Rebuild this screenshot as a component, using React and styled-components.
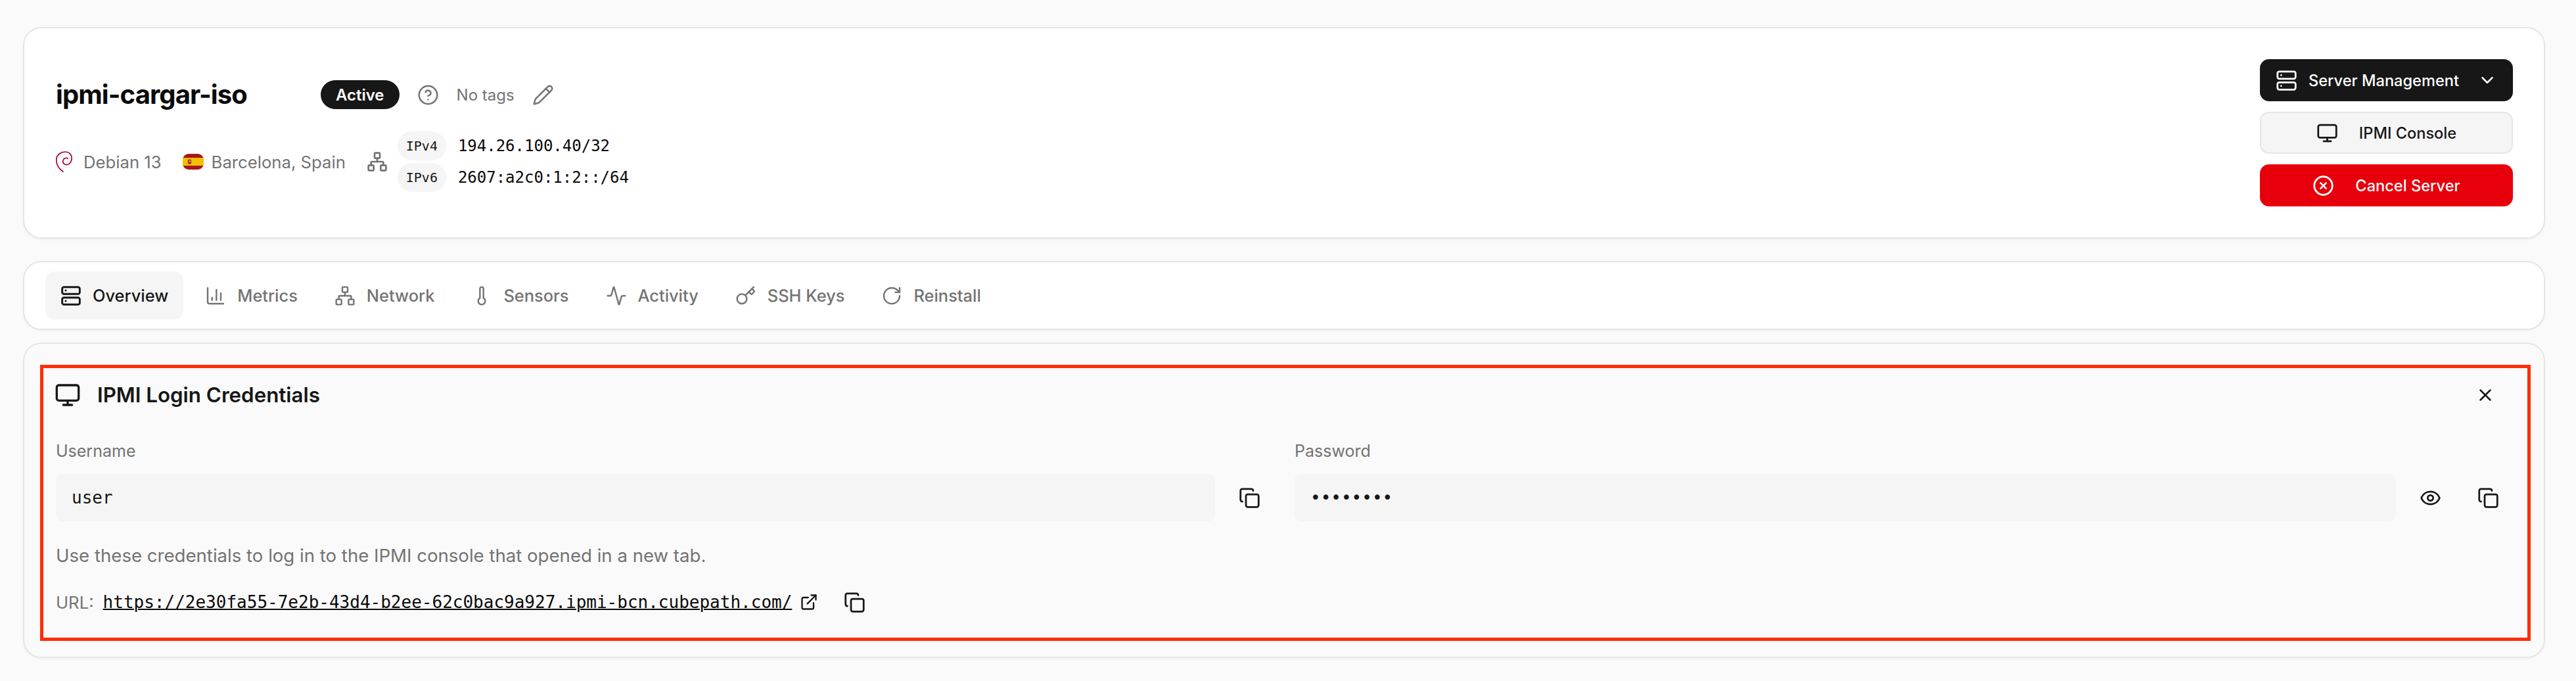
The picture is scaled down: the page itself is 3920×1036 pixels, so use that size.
import React from 'react';
import styled, { createGlobalStyle } from 'styled-components';
import {
  Server,
  ChevronDown,
  Monitor,
  CircleX,
  CircleHelp,
  Pencil,
  Network,
  ChartColumn,
  Thermometer,
  Activity,
  Key,
  RotateCw,
  Copy,
  Eye,
  X,
  ExternalLink,
} from 'lucide-react';

const GlobalStyle = createGlobalStyle`
  html, body {
    margin: 0;
    background: #fafafa;
  }
  * {
    box-sizing: border-box;
  }
`;

const Page = styled.div`
  display: flex;
  flex-direction: column;
  padding: 41px 47px 20px 35px;
  font-family: Inter, "Liberation Sans", sans-serif;
  color: #171717;
`;

const Card = styled.section`
  background: ${props => props.$bg || '#fff'};
  border: 2px solid #e5e5e5;
  border-radius: 28px;
  box-shadow: 0 2px 3px rgba(0, 0, 0, 0.04);
  margin-bottom: ${props => props.$mb || 0}px;
`;

const HeaderCard = styled(Card)`
  display: flex;
  align-items: center;
  justify-content: space-between;
  padding: 47px 47px 47px 48px;
`;

const HeaderInfo = styled.div`
  display: flex;
  flex-direction: column;
  gap: 34px;
  padding-top: 10px;
`;

const TitleRow = styled.div`
  display: flex;
  align-items: center;
  height: 44px;
`;

const ServerName = styled.h1`
  margin: -2px 112px 0 0;
  font-size: 40px;
  font-weight: 700;
  letter-spacing: -0.9px;
  color: #0a0a0a;
`;

const Badge = styled.span`
  display: inline-flex;
  align-items: center;
  height: 44px;
  padding: 0 23px;
  border-radius: 22px;
  background: #171717;
  color: #fff;
  font-size: 24px;
  font-weight: 600;
`;

const Muted = styled.span`
  color: #737373;
  font-size: ${props => props.$size || 25.7}px;
`;

const TagRow = styled.div`
  display: flex;
  align-items: center;
  color: #737373;
  margin-left: 27px;
  gap: 27px;
`;

const MetaRow = styled.div`
  display: flex;
  align-items: center;
  color: #737373;
`;

const MetaItem = styled.div`
  display: flex;
  align-items: center;
  gap: ${props => props.$gap}px;
  margin-right: 32px;
`;

const AddressList = styled.div`
  display: flex;
  flex-direction: column;
  gap: 4px;
  margin-left: 15px;
`;

const AddressRow = styled.div`
  display: flex;
  align-items: center;
  gap: 18px;
`;

const AddressKind = styled.span`
  display: inline-flex;
  align-items: center;
  justify-content: center;
  width: 74px;
  height: 44px;
  border-radius: 22px;
  background: #f5f5f5;
  color: #171717;
  font-family: "DejaVu Sans Mono", monospace;
  font-size: 20px;
`;

const Address = styled.span`
  color: #0a0a0a;
  font-family: "DejaVu Sans Mono", monospace;
  font-size: 24px;
`;

const Actions = styled.div`
  display: flex;
  flex-direction: column;
  gap: 16px;
  width: 385px;
`;

const ActionButton = styled.button`
  display: flex;
  align-items: center;
  justify-content: center;
  gap: 32px;
  height: 64px;
  padding: 0 24px;
  border-radius: 14px;
  border: ${props => (props.$variant === 'outline' ? '2px solid #e5e5e5' : 'none')};
  background: ${props =>
    ({ dark: '#171717', outline: '#f5f5f5', danger: '#e7000b' })[props.$variant]};
  color: ${props => (props.$variant === 'outline' ? '#171717' : '#fff')};
  font-family: inherit;
  font-size: 23.6px;
  font-weight: 500;
  white-space: nowrap;
`;

const MenuButton = styled(ActionButton)`
  gap: 17px;

  span {
    flex: 1;
    text-align: left;
  }
`;

const TabsCard = styled(Card)`
  display: flex;
  gap: 10px;
  padding: 14px 32px;
`;

const Tab = styled.div`
  display: flex;
  align-items: center;
  gap: 17px;
  height: 73px;
  padding: 0 23px;
  border-radius: 14px;
  background: ${props => (props.$active ? '#f5f5f5' : 'transparent')};
  color: ${props => (props.$active ? '#171717' : '#737373')};
  font-size: 25.4px;
  font-weight: 500;
`;

const ContentCard = styled(Card)`
  padding: 32px 20px 24px 24px;
`;

const Panel = styled.div`
  display: flex;
  flex-direction: column;
  border: 5px solid #ff2d0a;
  padding: 11px 28px 32px 19px;
`;

const PanelHeader = styled.div`
  display: flex;
  align-items: center;
  justify-content: space-between;
  height: 60px;
  margin-bottom: 40px;
`;

const PanelTitle = styled.h2`
  display: flex;
  align-items: center;
  gap: 25px;
  margin: 0 0 0 -2px;
  font-size: 31.3px;
  font-weight: 600;
`;

const FieldGrid = styled.div`
  display: grid;
  grid-template-columns: 1fr 1fr;
  column-gap: 37px;
`;

const Field = styled.div`
  display: flex;
  flex-direction: column;
  gap: 20px;
`;

const FieldLabel = styled.label`
  height: 30px;
  line-height: 30px;
  color: #737373;
  font-size: 25px;
`;

const FieldRow = styled.div`
  display: flex;
  align-items: center;
  gap: 20px;
`;

const Value = styled.div`
  display: flex;
  align-items: center;
  flex: 1;
  height: 72px;
  padding: 0 24px;
  border-radius: 10px;
  background: #f5f5f5;
  color: #171717;
  font-family: "DejaVu Sans Mono", monospace;
  font-size: 26px;
`;

const IconButton = styled.button`
  display: flex;
  align-items: center;
  justify-content: center;
  flex: none;
  width: ${props => props.$width || 64}px;
  height: 64px;
  margin-left: ${props => props.$ml || 0}px;
  margin-right: ${props => props.$mr || 0}px;
  padding: 0;
  border: none;
  background: transparent;
  color: #171717;
`;

const Help = styled.p`
  margin: 37px 0 0;
  height: 30px;
  line-height: 30px;
  color: #737373;
  font-size: 27.6px;
`;

const UrlRow = styled.div`
  display: flex;
  align-items: center;
  height: 44px;
  margin-top: 34px;
`;

const UrlLink = styled.a`
  margin-left: 14px;
  color: #0a0a0a;
  font-family: "DejaVu Sans Mono", monospace;
  font-size: 26px;
  text-decoration: underline;
  text-decoration-thickness: 2px;
`;

const DebianLogo = () => (
  <svg width="26" height="32" viewBox="0 0 26 32" fill="none" stroke="#a80030" strokeWidth="1.7" strokeLinecap="round">
    <path d="M11 31C3 26 0 18 1 11C2 5 8 1 14 1C21 1 25 6 24 13C23 18 19 21 15 20.5C12 20 10 17 11 14C12 11 15 9.5 18 11" />
  </svg>
);

const SpainFlag = () => (
  <svg width="32" height="24" viewBox="0 0 32 24">
    <rect width="32" height="24" rx="9" fill="#aa151b" />
    <rect y="6" width="32" height="12" fill="#f1bf00" />
    <rect x="8" y="8.5" width="5" height="7" rx="1.5" fill="#ad1519" />
    <rect x="9.5" y="10" width="2.5" height="3" fill="#c8b100" />
  </svg>
);

const tabs = [
  { label: 'Overview', Icon: Server, active: true },
  { label: 'Metrics', Icon: ChartColumn },
  { label: 'Network', Icon: Network },
  { label: 'Sensors', Icon: Thermometer },
  { label: 'Activity', Icon: Activity },
  { label: 'SSH Keys', Icon: Key },
  { label: 'Reinstall', Icon: RotateCw },
];

export default function App() {
  return (
    <Page>
      <GlobalStyle />
      <HeaderCard $mb={34}>
        <HeaderInfo>
          <TitleRow>
            <ServerName>ipmi-cargar-iso</ServerName>
            <Badge>Active</Badge>
            <TagRow>
              <CircleHelp size={33} strokeWidth={1.8} />
              <Muted $size={24}>No tags</Muted>
              <Pencil size={33} strokeWidth={1.8} />
            </TagRow>
          </TitleRow>
          <MetaRow>
            <MetaItem $gap={16}>
              <DebianLogo />
              <Muted>Debian 13</Muted>
            </MetaItem>
            <MetaItem $gap={12}>
              <SpainFlag />
              <Muted>Barcelona, Spain</Muted>
            </MetaItem>
            <Network size={32} strokeWidth={2} />
            <AddressList>
              <AddressRow>
                <AddressKind>IPv4</AddressKind>
                <Address>194.26.100.40/32</Address>
              </AddressRow>
              <AddressRow>
                <AddressKind>IPv6</AddressKind>
                <Address>2607:a2c0:1:2::/64</Address>
              </AddressRow>
            </AddressList>
          </MetaRow>
        </HeaderInfo>
        <Actions>
          <MenuButton $variant="dark">
            <Server size={33} strokeWidth={2} />
            <span>Server Management</span>
            <ChevronDown size={30} strokeWidth={2} />
          </MenuButton>
          <ActionButton $variant="outline">
            <Monitor size={33} strokeWidth={2} />
            <span>IPMI Console</span>
          </ActionButton>
          <ActionButton $variant="danger">
            <CircleX size={33} strokeWidth={2} />
            <span>Cancel Server</span>
          </ActionButton>
        </Actions>
      </HeaderCard>

      <TabsCard $mb={19}>
        {tabs.map(({ label, Icon, active }) => (
          <Tab key={label} $active={active}>
            <Icon size={32} strokeWidth={active ? 2.2 : 1.8} />
            {label}
          </Tab>
        ))}
      </TabsCard>

      <ContentCard $bg="#fafafa">
        <Panel>
          <PanelHeader>
            <PanelTitle>
              <Monitor size={40} strokeWidth={2} />
              IPMI Login Credentials
            </PanelTitle>
            <IconButton $mr={4}>
              <X size={30} strokeWidth={2} />
            </IconButton>
          </PanelHeader>
          <FieldGrid>
            <Field>
              <FieldLabel>Username</FieldLabel>
              <FieldRow>
                <Value>user</Value>
                <IconButton>
                  <Copy size={33} strokeWidth={2} />
                </IconButton>
              </FieldRow>
            </Field>
            <Field>
              <FieldLabel>Password</FieldLabel>
              <FieldRow>
                <Value>••••••••</Value>
                <IconButton>
                  <Eye size={33} strokeWidth={2} />
                </IconButton>
                <IconButton $ml={4}>
                  <Copy size={33} strokeWidth={2} />
                </IconButton>
              </FieldRow>
            </Field>
          </FieldGrid>
          <Help>Use these credentials to log in to the IPMI console that opened in a new tab.</Help>
          <UrlRow>
            <Muted>URL:</Muted>
            <UrlLink>https://2e30fa55-7e2b-43d4-b2ee-62c0bac9a927.ipmi-bcn.cubepath.com/</UrlLink>
            <IconButton $width={28} $ml={12}>
              <ExternalLink size={28} strokeWidth={2} />
            </IconButton>
            <IconButton $ml={23}>
              <Copy size={33} strokeWidth={2} />
            </IconButton>
          </UrlRow>
        </Panel>
      </ContentCard>
    </Page>
  );
}
